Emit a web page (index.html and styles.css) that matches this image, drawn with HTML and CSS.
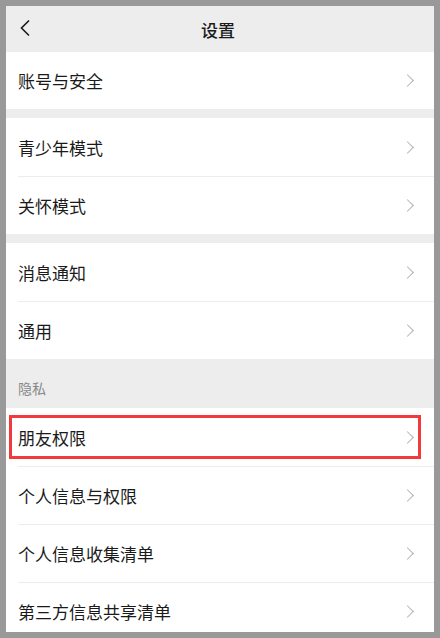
FILE: index.html
```html
<!DOCTYPE html>
<html lang="zh-CN">
<head>
  <meta charset="utf-8">
  <title>设置</title>
  <link rel="stylesheet" href="styles.css">
</head>
<body>
  <div class="phone">
    <div class="nav-bar">
      <svg class="back-icon" width="12" height="18" viewBox="0 0 12 18">
        <path d="M10 1.5 L2.5 9 L10 16.5" fill="none" stroke="#1a1a1a" stroke-width="1.6"/>
      </svg>
      <h1>设置</h1>
    </div>

    <div class="group">
      <div class="cell first">账号与安全<span class="arrow"></span></div>
    </div>

    <div class="group">
      <div class="cell">青少年模式<span class="arrow"></span></div>
      <div class="cell">关怀模式<span class="arrow"></span></div>
    </div>

    <div class="group">
      <div class="cell">消息通知<span class="arrow"></span></div>
      <div class="cell">通用<span class="arrow"></span></div>
    </div>

    <div class="section-title">隐私</div>
    <div class="group flat">
      <div class="cell marked">朋友权限<span class="arrow"></span></div>
      <div class="cell">个人信息与权限<span class="arrow"></span></div>
      <div class="cell">个人信息收集清单<span class="arrow"></span></div>
      <div class="cell">第三方信息共享清单<span class="arrow"></span></div>
    </div>
  </div>
</body>
</html>
```

FILE: styles.css
```css
body {
  margin: 0;
  padding: 6px;
  height: 638px;
  box-sizing: border-box;
  background-color: #999;
  font-family: "Noto Sans CJK SC", "Noto Sans", sans-serif;
}
.phone {
  height: 626px;
  overflow: hidden;
  background-color: #ededed;
}
.nav-bar {
  position: relative;
  height: 46px;
  display: flex;
  align-items: center;
  justify-content: center;
  background-color: #ededed;
}
.nav-bar h1 {
  margin: 0 0 0 -4px;
  font-size: 17px;
  font-weight: 500;
  color: #1a1a1a;
}
.back-icon {
  position: absolute;
  left: 13px;
  top: 13px;
}
.group {
  background-color: #fff;
  margin-bottom: 9px;
}
.group.flat {
  margin-bottom: 0;
}
.cell {
  position: relative;
  box-sizing: border-box;
  height: 58px;
  display: flex;
  align-items: center;
  justify-content: space-between;
  padding: 0 19px 0 12px;
  font-size: 17px;
  color: #1a1a1a;
}
.cell.first {
  height: 57px;
}
.cell + .cell {
  border-top: 1px solid #ececec;
  margin-left: 12px;
  padding-left: 0;
}
.arrow {
  width: 8px;
  height: 8px;
  border-top: 1.3px solid #b2b2b2;
  border-right: 1.3px solid #b2b2b2;
  transform: rotate(45deg);
  margin-right: 3px;
}
.section-title {
  height: 40px;
  display: flex;
  align-items: center;
  padding-left: 12px;
  font-size: 14px;
  color: #888;
}
.marked::after {
  content: "";
  position: absolute;
  left: 3px;
  right: 13px;
  top: 7px;
  bottom: 7px;
  border: 3px solid #f23a3c;
}
```
